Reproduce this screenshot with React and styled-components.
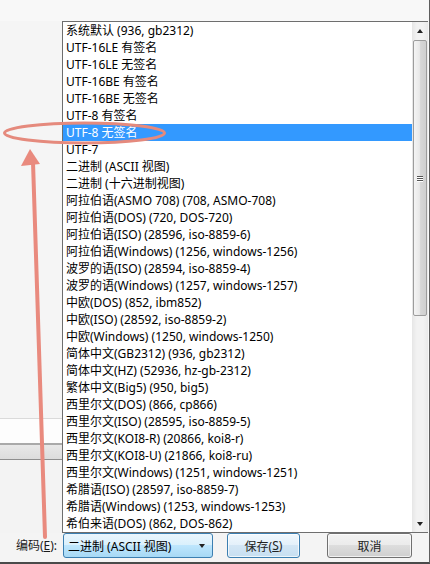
import React from 'react';
import styled, { createGlobalStyle } from 'styled-components';

const GlobalStyle = createGlobalStyle`
    html, body {
        margin: 0;
        padding: 0;
        background: #f7f7f7;
    }
    body {
        font-family: "Segoe UI", "Noto Sans", "Noto Sans CJK SC", sans-serif;
        font-size: 12px;
        color: #000;
    }
`;

const encodings = [
    '系统默认 (936, gb2312)',
    'UTF-16LE 有签名',
    'UTF-16LE 无签名',
    'UTF-16BE 有签名',
    'UTF-16BE 无签名',
    'UTF-8 有签名',
    'UTF-8 无签名',
    'UTF-7',
    '二进制 (ASCII 视图)',
    '二进制 (十六进制视图)',
    '阿拉伯语(ASMO 708) (708, ASMO-708)',
    '阿拉伯语(DOS) (720, DOS-720)',
    '阿拉伯语(ISO) (28596, iso-8859-6)',
    '阿拉伯语(Windows) (1256, windows-1256)',
    '波罗的语(ISO) (28594, iso-8859-4)',
    '波罗的语(Windows) (1257, windows-1257)',
    '中欧(DOS) (852, ibm852)',
    '中欧(ISO) (28592, iso-8859-2)',
    '中欧(Windows) (1250, windows-1250)',
    '简体中文(GB2312) (936, gb2312)',
    '简体中文(HZ) (52936, hz-gb-2312)',
    '繁体中文(Big5) (950, big5)',
    '西里尔文(DOS) (866, cp866)',
    '西里尔文(ISO) (28595, iso-8859-5)',
    '西里尔文(KOI8-R) (20866, koi8-r)',
    '西里尔文(KOI8-U) (21866, koi8-ru)',
    '西里尔文(Windows) (1251, windows-1251)',
    '希腊语(ISO) (28597, iso-8859-7)',
    '希腊语(Windows) (1253, windows-1253)',
    '希伯来语(DOS) (862, DOS-862)',
];

const SELECTED = 6; // UTF-8 无签名

const App = () => {
    return (
        <>
            <GlobalStyle />
            <Dialog>
                <TopStrip />
                <Middle>
                    <LeftPane>
                        <FileField />
                        <GrayBand />
                        <LeftRest />
                    </LeftPane>
                    <DropList>
                        <Items>
                            {encodings.map((name, index) => (
                                <Item key={index} $selected={index === SELECTED}>
                                    {name}
                                </Item>
                            ))}
                        </Items>
                        <ScrollBar>
                            <ArrowButton>
                                <Tri $up />
                            </ArrowButton>
                            <Thumb>
                                <Grip>
                                    <span />
                                    <span />
                                    <span />
                                </Grip>
                            </Thumb>
                            <Track />
                            <ArrowButton>
                                <Tri />
                            </ArrowButton>
                        </ScrollBar>
                    </DropList>
                </Middle>
                <BottomBar>
                    <Label>
                        编码(<u>E</u>):
                    </Label>
                    <Combo>
                        <ComboText>二进制 (ASCII 视图)</ComboText>
                        <Tri />
                    </Combo>
                    <Button $default $width={73}>
                        保存(<u>S</u>)
                    </Button>
                    <Button $width={85} style={{ marginLeft: 27 }}>
                        取消
                    </Button>
                </BottomBar>

                {/* 빨간 표시: 선택 항목 타원 + 화살표 */}
                <Annotation width="430" height="564" viewBox="0 0 430 564">
                    <ellipse cx="84.5" cy="133" rx="80" ry="10" fill="none" stroke="#e58a7d" strokeWidth="3" />
                    <line x1="45" y1="537" x2="33" y2="162" stroke="#e98a7e" strokeWidth="4" strokeLinecap="round" />
                    <polygon points="30,149 21,166 40,164" fill="#e98a7e" />
                </Annotation>
            </Dialog>
        </>
    );
};

export default App;

const Dialog = styled.div`
    position: relative;
    width: 430px;
    height: 564px;
    box-sizing: border-box;
    display: flex;
    flex-direction: column;
    background: #f8f8f8;
    border-right: 1px solid #5e5e5e;
    border-bottom: 2px solid #4a4a4a;
    overflow: hidden;
`;

const TopStrip = styled.div`
    height: 21px;
    flex: none;
    background: #f8f8f8;
`;

const Middle = styled.div`
    display: flex;
    height: 512px;
    flex: none;
`;

const LeftPane = styled.div`
    width: 62px;
    flex: none;
    display: flex;
    flex-direction: column;
    justify-content: flex-end;
    background: #f5f5f5;
`;

const FileField = styled.div`
    height: 24px;
    background: #fdfdfd;
    border-top: 1px solid #dadada;
    border-bottom: 2px solid #a9a9a9;
`;

const GrayBand = styled.div`
    height: 14px;
    background: linear-gradient(#e8e8e8, #dcdcdc);
    border-bottom: 1px solid #8e8e8e;
`;

const LeftRest = styled.div`
    height: 73px;
    background: #f3f3f3;
`;

const DropList = styled.div`
    flex: 1;
    display: flex;
    background: #fff;
    border: 1px solid #6e6e6e;
    border-right: none;
    margin-right: 1px;
`;

const Items = styled.div`
    flex: 1;
    display: flex;
    flex-direction: column;
`;

const Item = styled.div`
    height: 17px;
    line-height: 17px;
    padding-left: 3px;
    white-space: nowrap;
    color: ${(p) => (p.$selected ? '#fff' : '#000')};
    background: ${(p) => (p.$selected ? '#3399ff' : 'transparent')};
`;

const ScrollBar = styled.div`
    width: 16px;
    flex: none;
    display: flex;
    flex-direction: column;
    align-items: center;
    background: linear-gradient(90deg, #e6e6e6, #f2f2f2 30%, #f2f2f2 70%, #e9e9e9);
`;

const ArrowButton = styled.div`
    height: 17px;
    width: 100%;
    display: flex;
    align-items: center;
    justify-content: center;
`;

const Tri = styled.span`
    width: 0;
    height: 0;
    border-left: 3.5px solid transparent;
    border-right: 3.5px solid transparent;
    ${(p) => (p.$up ? 'border-bottom: 4px solid #222;' : 'border-top: 4px solid #222;')}
`;

const Thumb = styled.div`
    margin-top: 1px;
    width: 14px;
    height: 276px;
    box-sizing: border-box;
    border: 1px solid #9c9c9c;
    border-radius: 2px;
    background: linear-gradient(90deg, #f4f4f4, #e9e9e9 45%, #d6d6d6 55%, #cfcfcf);
    display: flex;
    align-items: center;
    justify-content: center;
`;

const Grip = styled.div`
    display: flex;
    flex-direction: column;
    gap: 1px;

    span {
        display: block;
        width: 6px;
        height: 1px;
        background: #555;
        box-shadow: 0 1px 0 #fff;
    }
`;

const Track = styled.div`
    flex: 1;
`;

const BottomBar = styled.div`
    flex: 1;
    display: flex;
    align-items: flex-start;
    background: #f4f4f4;
`;

const Label = styled.div`
    width: 60px;
    height: 25px;
    line-height: 25px;
    text-align: right;
    padding-right: 3px;
    box-sizing: border-box;
    color: #1a1a1a;
    font-size: 12px;

    u {
        text-decoration: underline;
    }
`;

const Combo = styled.div`
    width: 150px;
    height: 25px;
    margin-left: 3px;
    box-sizing: border-box;
    display: flex;
    align-items: center;
    padding: 0 7px 0 4px;
    border: 1px solid #3c7fb1;
    border-radius: 3px;
    background: linear-gradient(#eaf6fd, #d9f0fc 50%, #bee6fd 50%, #a7d9f5);
`;

const ComboText = styled.span`
    flex: 1;
    white-space: nowrap;
`;

const Button = styled.div`
    width: ${(p) => p.$width}px;
    height: 25px;
    margin-left: 14px;
    box-sizing: border-box;
    display: flex;
    align-items: center;
    justify-content: center;
    color: #222;
    border: 1px solid ${(p) => (p.$default ? '#3c7fb1' : '#707070')};
    border-radius: 3px;
    background: ${(p) =>
        p.$default
            ? 'linear-gradient(#f1f8fd, #e3f0fa 50%, #d3e6f5 50%, #c7dff1)'
            : 'linear-gradient(#f2f2f2, #ebebeb 50%, #dddddd 50%, #cfcfcf)'};
    box-shadow: inset 0 0 0 1px rgba(255, 255, 255, 0.7);
`;

const Annotation = styled.svg`
    position: absolute;
    left: 0;
    top: 0;
    pointer-events: none;
`;
